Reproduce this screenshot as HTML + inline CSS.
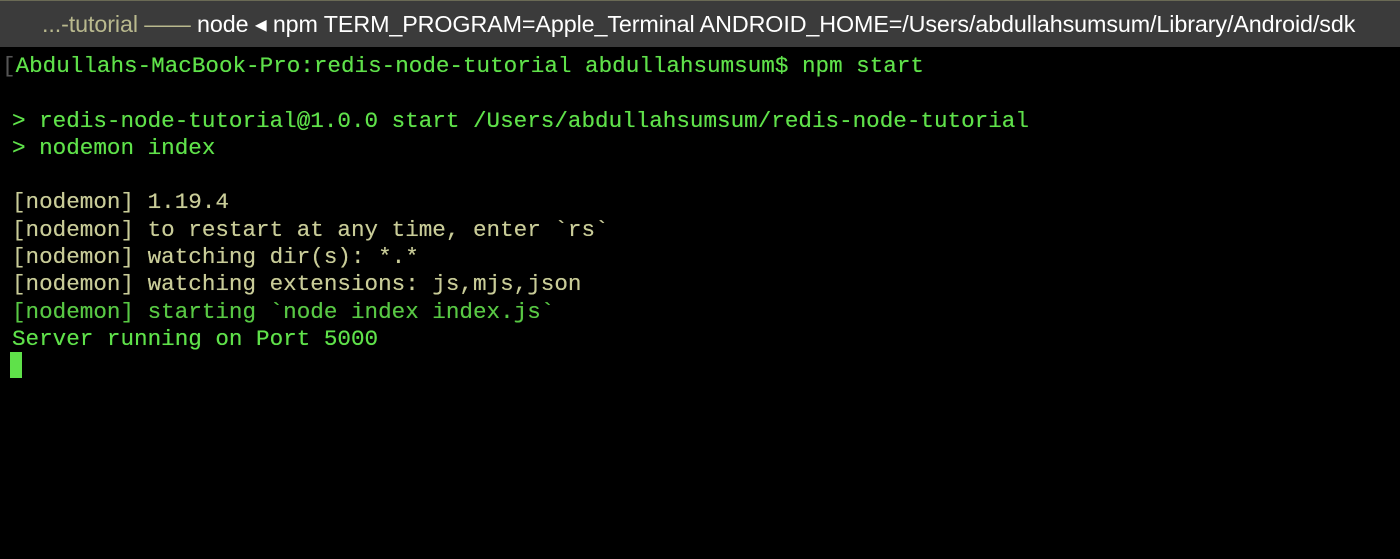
<!DOCTYPE html>
<html><head><meta charset="utf-8"><style>
body{margin:0;width:1400px;height:559px;background:#000;overflow:hidden}
.t{position:absolute;left:0;top:0;width:1400px;height:47px;background:#3b3b3b;border-top:1px solid #6a6a55;box-sizing:border-box}
.tt{position:absolute;left:42px;top:10px;font:23.3px "Liberation Sans",sans-serif;color:#fff;white-space:pre;letter-spacing:-0.1px}
.tt .d{color:#b9b98e}
pre{position:absolute;left:12px;top:53px;margin:0;font:22.6px/27.3px "Liberation Mono",monospace;color:#5fe14a;text-shadow:0 0 0.4px currentColor}
.y{color:#c9cc98}.g{color:#58c844}
.c{position:absolute;left:10px;top:352px;width:12px;height:26px;background:#5fe14a}
</style></head><body>
<div class="t"><div class="tt"><span class="d">...-tutorial —— </span>node ◂ npm TERM_PROGRAM=Apple_Terminal ANDROID_HOME=/Users/abdullahsumsum/Library/Android/sdk</div></div>
<pre><span style="color:#555;margin-left:-10px">[</span>Abdullahs-MacBook-Pro:redis-node-tutorial abdullahsumsum$ npm start

> redis-node-tutorial@1.0.0 start /Users/abdullahsumsum/redis-node-tutorial
> nodemon index

<span class="y">[nodemon] 1.19.4
[nodemon] to restart at any time, enter `rs`
[nodemon] watching dir(s): *.*
[nodemon] watching extensions: js,mjs,json</span>
<span class="g">[nodemon] starting `node index index.js`</span>
Server running on Port 5000
</pre>
<div class="c"></div>
</body></html>
